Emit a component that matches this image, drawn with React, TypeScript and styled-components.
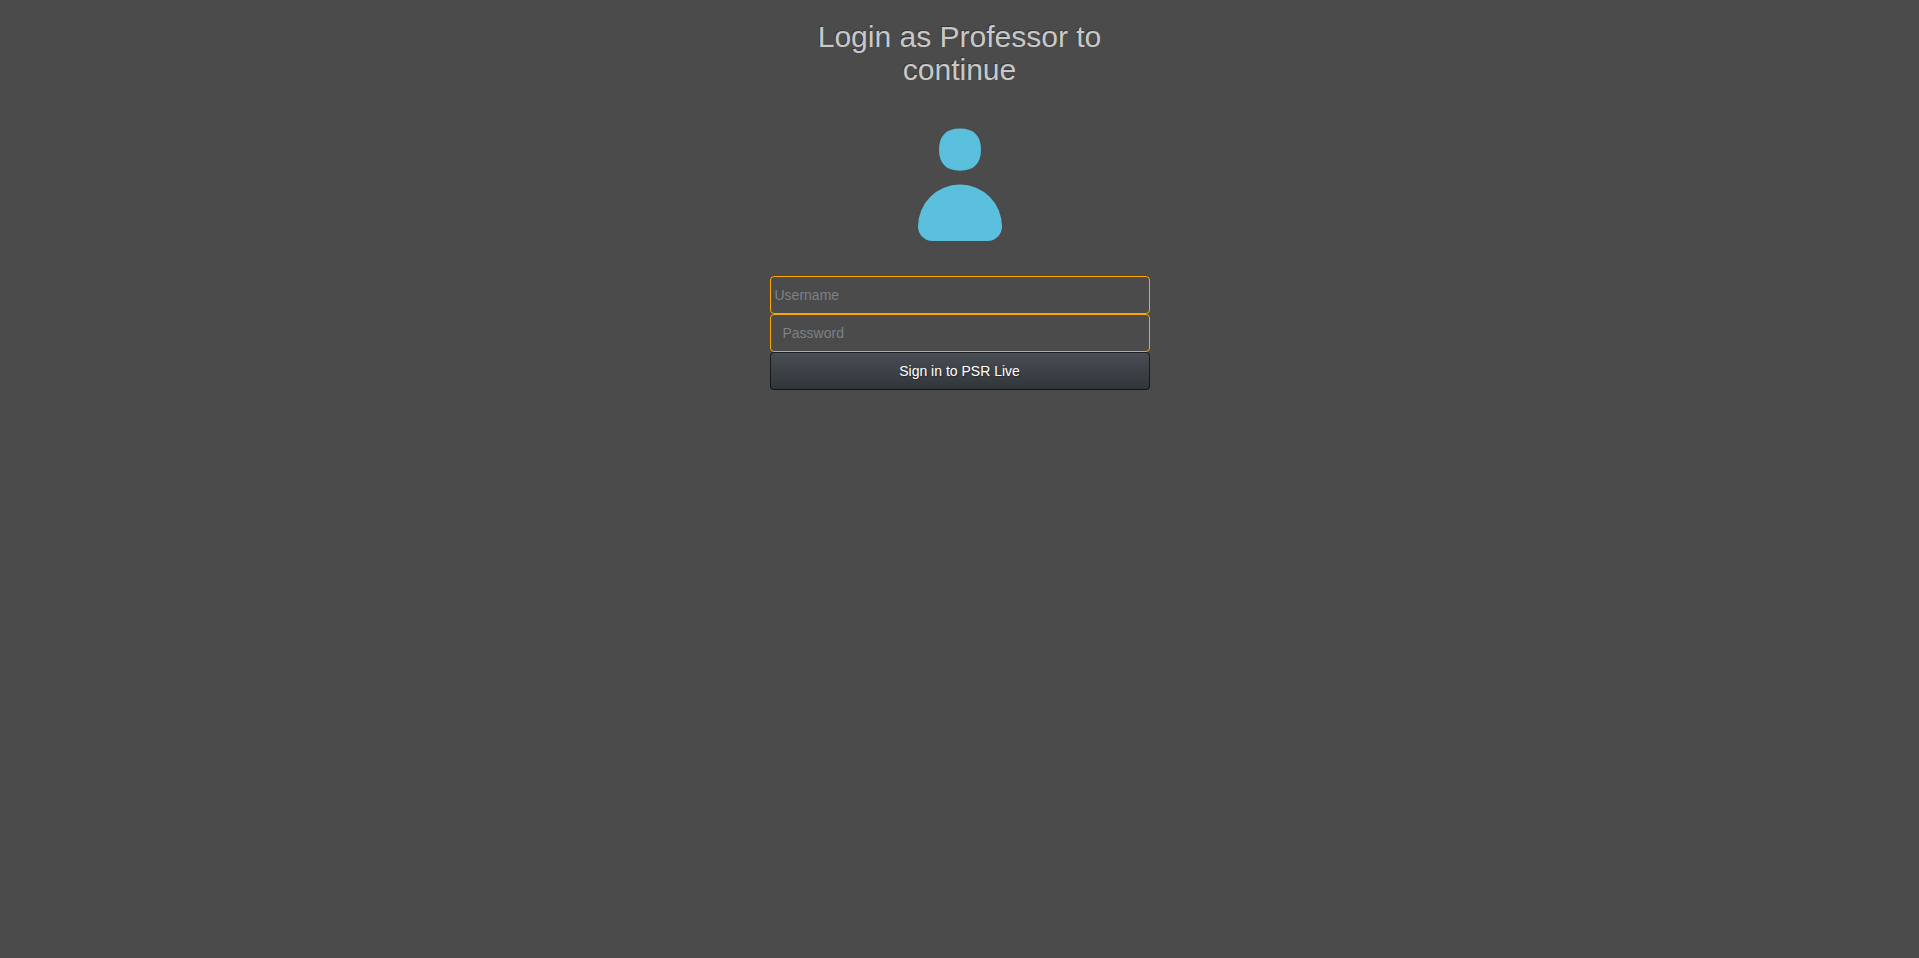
import React from "react";
import styled, { createGlobalStyle } from "styled-components";

const GlobalStyle = createGlobalStyle`
  *, *::before, *::after { box-sizing: border-box; }
  body {
    margin: 0;
    background: #4b4b4b;
    color: #c8c8c8;
    font-family: "Liberation Sans", Arial, sans-serif;
    font-size: 14px;
    line-height: 20px;
  }
`;

const Page = styled.main`
  display: flex;
  justify-content: center;
  padding: 20px 16px;
`;

const LoginForm = styled.form`
  display: flex;
  flex-direction: column;
  width: 100%;
  max-width: 380px;
`;

const Title = styled.h1`
  margin: 0 0 42px;
  font-size: 30px;
  font-weight: 400;
  line-height: 33px;
  text-align: center;
  text-shadow: -1px -1px 0 rgba(0, 0, 0, 0.3);
`;

const Avatar = styled.svg`
  align-self: center;
  width: 84px;
  height: 113px;
  margin-bottom: 35px;
  fill: #5bc0de;
`;

const Field = styled.input<{ $inset: number }>`
  display: block;
  width: 100%;
  height: 38px;
  margin: 0;
  padding: 8px ${({ $inset }) => $inset}px;
  border: 1px solid #ffa500;
  border-radius: 4px;
  outline: none;
  background: transparent;
  color: #c8c8c8;
  font: inherit;

  &::placeholder {
    color: #7a8288;
    opacity: 1;
  }
`;

const SubmitButton = styled.button`
  height: 38px;
  padding: 8px 12px;
  border: 1px solid rgba(0, 0, 0, 0.6);
  border-radius: 4px;
  background: linear-gradient(#484e55, #3a3f44 60%, #313539) border-box;
  color: #fff;
  font: inherit;
  text-shadow: 1px 1px 1px rgba(0, 0, 0, 0.3);
  cursor: pointer;
`;

export default function App() {
  return (
    <>
      <GlobalStyle />
      <Page>
        <LoginForm onSubmit={(event) => event.preventDefault()}>
          <Title>Login as Professor to continue</Title>
          <Avatar viewBox="0 0 84 113" aria-hidden="true">
            <path d="M42 0.500C56 0.500 63 8 63 21.500C63 35.500 56 42.700 42 42.700C28 42.700 21 35.500 21 21.500C21 8 28 0.500 42 0.500Z" />
            <path d="M42 56.500A42 42 0 0 1 84 98.500A14.500 14.500 0 0 1 69.500 113H14.500A14.500 14.500 0 0 1 0 98.500A42 42 0 0 1 42 56.500Z" />
          </Avatar>
          <Field $inset={4} type="text" name="username" placeholder="Username" aria-label="Username" />
          <Field $inset={12} type="password" name="password" placeholder="Password" aria-label="Password" />
          <SubmitButton type="submit">Sign in to PSR Live</SubmitButton>
        </LoginForm>
      </Page>
    </>
  );
}
